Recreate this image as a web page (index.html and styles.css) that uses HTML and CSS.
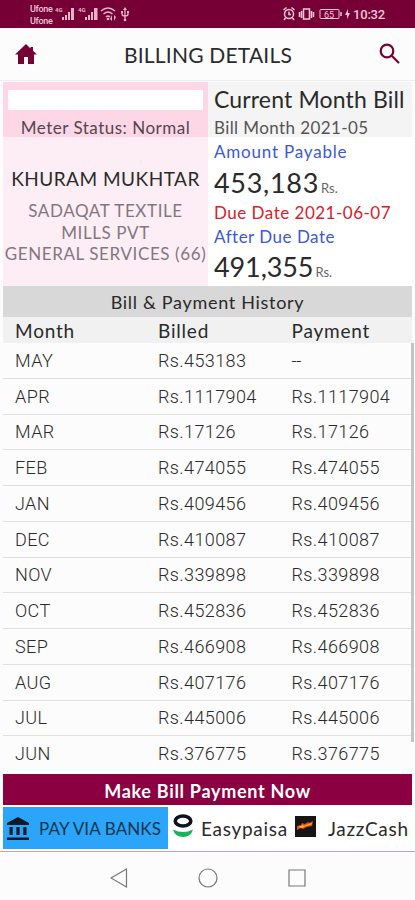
FILE: index.html
```
<!DOCTYPE html>
<html lang="en">
<head>
    <meta charset="UTF-8">
    <meta name="viewport" content="width=device-width, initial-scale=1.0">
    <title>Billing Details</title>
    <link rel="stylesheet" href="styles.css">
</head>
<body>
    <div class="status-bar">
        <div class="carrier"><span>Ufone</span><span>Ufone</span></div>
        <svg class="signals" width="77" height="16" viewBox="0 0 77 16" fill="#e3b4c8">
            <text x="0" y="6" class="net">4G</text>
            <path d="M7 11h2v3H7zM10 9h2v5h-2zM13 6h2v8h-2zM16 2h3v12h-3z"/>
            <text x="23" y="6" class="net">4G</text>
            <path d="M30 11h2v3h-2zM33 9h2v5h-2zM36 6h2v8h-2zM39 2h3.500v12H39z"/>
            <g fill="none" stroke="#e3b4c8" stroke-width="1.500">
                <path d="M46 5q7-6 14 0M48.500 8q4.500-4 9 0M51 11q2-2 4 0"/>
                <path d="M70 13V3M67 6v2q0 2 3 2t3-2V6" stroke-width="1.300"/>
            </g>
            <circle cx="53" cy="13" r="1.300"/>
            <path d="M57 9v6l-2-2zM59 15V9l2 2zM70 1l2 3h-4zM66 5h2v2h-2zM72 5h2v2h-2z"/>
            <circle cx="70" cy="14" r="1.300"/>
        </svg>
        <svg class="system" width="70" height="16" viewBox="0 0 70 16" fill="none" stroke="#ecc8d7" stroke-width="1.500">
            <circle cx="7" cy="8" r="4.500"/>
            <path d="M7 5.500V8.500H9M1.500 4l3-2.500M12.500 4l-3-2.500M3.500 12l-1.500 2M10.500 12l1.500 2"/>
            <path d="M21.500 3h6v10h-6zM19.500 5v7M29.500 5v7M17.500 6v5M31.500 6v5"/>
            <rect x="38" y="3.500" width="19" height="9" rx="1" stroke-width="1"/>
            <path d="M59 6v4" stroke-width="1.500"/>
            <path d="M66 3l-3 6h2v4l3-6h-2z" fill="#ecc8d7" stroke="none"/>
            <text x="42" y="11.500" class="battery">65</text>
        </svg>
        <span class="clock">10:32</span>
    </div>

    <div class="header">
        <svg class="home" width="22" height="21" viewBox="0 0 22 21">
            <path d="M11 0 0 10.500h3V20h6v-7h4v7h6v-9.500h3L18 6.800V3h-2.500v1.400z" fill="#760035"/>
        </svg>
        <h1>BILLING DETAILS</h1>
        <svg class="search" width="22" height="22" viewBox="0 0 22 22" fill="none" stroke="#760035" stroke-width="2.200">
            <circle cx="8" cy="8" r="6.300"/>
            <path d="M12.500 12.500 20 20"/>
        </svg>
    </div>

    <div class="summary">
        <div class="customer">
            <div class="meter">
                <div class="account-no"></div>
                <div class="meter-status">Meter Status: Normal</div>
            </div>
            <div class="name">KHURAM MUKHTAR</div>
            <div class="address">SADAQAT TEXTILE<br>MILLS PVT<br><span class="tariff">GENERAL SERVICES (66)</span></div>
        </div>
        <div class="bill">
            <div class="bill-head">
                <div class="bill-title">Current Month Bill</div>
                <div class="bill-month">Bill Month 2021-05</div>
            </div>
            <div class="bill-label payable">Amount Payable</div>
            <div class="amount">453,183<small>Rs.</small></div>
            <div class="bill-label due">Due Date 2021-06-07</div>
            <div class="bill-label after">After Due Date</div>
            <div class="amount amount-after">491,355<small>Rs.</small></div>
        </div>
    </div>

    <div class="history-title">Bill &amp; Payment History</div>
    <div class="row row-head"><span>Month</span><span>Billed</span><span>Payment</span></div>
    <div class="history">
        <div class="row"><span>MAY</span><span>Rs.453183</span><span class="none">--</span></div>
        <div class="row"><span>APR</span><span>Rs.1117904</span><span>Rs.1117904</span></div>
        <div class="row"><span>MAR</span><span>Rs.17126</span><span>Rs.17126</span></div>
        <div class="row"><span>FEB</span><span>Rs.474055</span><span>Rs.474055</span></div>
        <div class="row"><span>JAN</span><span>Rs.409456</span><span>Rs.409456</span></div>
        <div class="row"><span>DEC</span><span>Rs.410087</span><span>Rs.410087</span></div>
        <div class="row"><span>NOV</span><span>Rs.339898</span><span>Rs.339898</span></div>
        <div class="row"><span>OCT</span><span>Rs.452836</span><span>Rs.452836</span></div>
        <div class="row"><span>SEP</span><span>Rs.466908</span><span>Rs.466908</span></div>
        <div class="row"><span>AUG</span><span>Rs.407176</span><span>Rs.407176</span></div>
        <div class="row"><span>JUL</span><span>Rs.445006</span><span>Rs.445006</span></div>
        <div class="row"><span>JUN</span><span>Rs.376775</span><span>Rs.376775</span></div>
        <div class="scrollbar"></div>
    </div>

    <div class="pay-title">Make Bill Payment Now</div>
    <div class="pay-options">
        <div class="pay banks">
            <svg width="22" height="24" viewBox="0 0 22 24" fill="#0b1a24">
                <path d="M11 0 22 6v2H0V6zM2.500 10h3.200v8H2.500zM9.400 10h3.200v8H9.400zM16.300 10h3.200v8h-3.200zM0 20.500h22V23H0z"/>
            </svg>
            <span>PAY VIA BANKS</span>
        </div>
        <div class="pay easypaisa">
            <svg width="22" height="24" viewBox="0 0 22 24" fill="none">
                <ellipse cx="11" cy="7" rx="7.800" ry="5" stroke="#10131f" stroke-width="3.600"/>
                <path d="M1 15.500q10 5 20 0-2 7.500-10 7.500T1 15.500z" fill="#18b35b"/>
            </svg>
            <span>Easypaisa</span>
        </div>
        <div class="pay jazzcash">
            <svg width="21" height="21" viewBox="0 0 21 21">
                <rect width="21" height="21" fill="#171514"/>
                <path d="M2 10l4-1 1-2 3 1 3-2 1 1 4-2-1 5-5 1-4 2-2-1-4 2z" fill="#d94c20"/>
                <path d="M3 11l5-2 1 1 4-2 4-1-1 2-5 1-4 2z" fill="#f5b32b"/>
            </svg>
            <span>JazzCash</span>
        </div>
    </div>

    <div class="nav-bar">
        <svg width="18" height="20" viewBox="0 0 18 20"><path d="M1 10 16.500 1v18z"/></svg>
        <svg width="20" height="20" viewBox="0 0 20 20"><circle cx="10" cy="10" r="9"/></svg>
        <svg width="18" height="18" viewBox="0 0 18 18"><path d="M1 1h16v16H1z"/></svg>
    </div>
</body>
</html>
```
FILE: styles.css
```
* {
    box-sizing: border-box;
}
body {
    margin: 0;
    width: 415px;
    height: 900px;
    overflow: hidden;
    background: #fcfcfc;
    color: #2a2a2a;
    font-family: Lato, "Open Sans", sans-serif;
    white-space: nowrap;
}
svg {
    display: block;
    flex: none;
}
.status-bar {
    display: flex;
    align-items: center;
    height: 28px;
    padding: 0 29px 0 30px;
    background: #760035;
    color: #ecc8d7;
    font-family: Roboto, sans-serif;
}
.carrier {
    display: flex;
    flex-direction: column;
    width: 25px;
    padding-top: 2px;
    font-size: 9px;
    font-weight: 500;
    line-height: 12px;
    letter-spacing: -0.3px;
}
.net {
    font: bold 6px Roboto, sans-serif;
}
.system {
    margin-left: auto;
}
.battery {
    font: 9px Roboto, sans-serif;
    fill: #ecc8d7;
    stroke: none;
}
.clock {
    width: 33px;
    margin-left: 1px;
    font-size: 13px;
    font-weight: 500;
    letter-spacing: -0.2px;
}
.header {
    display: flex;
    align-items: center;
    justify-content: space-between;
    height: 53px;
    padding: 0 14px 0 15px;
    background: #fcfcfc;
    border-bottom: 1px solid #eee;
}
.header h1 {
    margin: 1px 0 0;
    font-size: 21px;
    font-weight: 400;
    letter-spacing: 0.2px;
}
.summary {
    display: flex;
    height: 205px;
    padding: 1px 3px 0;
}
.customer {
    width: 205px;
    background: #fdeef5;
    text-align: center;
}
.meter {
    height: 55px;
    padding: 8px 5px 0;
    background: #fdd7e6;
}
.account-no {
    height: 20px;
    background: #fff;
}
.meter-status {
    padding-top: 7px;
    font-size: 17px;
    line-height: 22px;
    letter-spacing: 0.5px;
    color: #514850;
}
.name {
    padding-top: 31px;
    font-size: 19px;
    line-height: 22px;
    letter-spacing: 0.5px;
}
.address {
    padding-top: 10px;
    font-size: 17px;
    line-height: 21.500px;
    letter-spacing: 0.6px;
    color: #83777f;
}
.tariff {
    margin: 0 -5px;
}
.bill {
    flex: 1;
    background: #fff;
}
.bill-head {
    height: 55px;
    padding: 3px 0 0 6px;
    background: #f4f4f4;
}
.bill-title {
    font-size: 23px;
    line-height: 28px;
    letter-spacing: 0.15px;
}
.bill-month {
    font-size: 17px;
    line-height: 29px;
    letter-spacing: 0.4px;
    color: #555;
}
.bill-label {
    padding-left: 6px;
    font-size: 17px;
    line-height: 24px;
    letter-spacing: 0.5px;
    color: #3d58d4;
}
.payable {
    padding-top: 3px;
    line-height: 23px;
    letter-spacing: 0.8px;
}
.due {
    color: #d8202a;
}
.amount {
    height: 38px;
    padding-left: 6px;
    font-size: 27px;
    line-height: 40px;
    letter-spacing: 0.7px;
}
.amount small {
    margin-left: 2px;
    font-size: 13px;
    letter-spacing: 0;
    color: #666;
}
.amount-after {
    line-height: 36px;
    letter-spacing: -0.1px;
}
.history-title {
    height: 31px;
    margin: 0 3px;
    background: #d8d8d8;
    text-align: center;
    font-size: 18px;
    line-height: 32px;
    letter-spacing: 0.7px;
}
.row {
    display: grid;
    grid-template-columns: 143px 133.500px 1fr;
    align-items: center;
    height: 35.750px;
    margin: 0 3px;
    padding-left: 12px;
    border-bottom: 1px solid #e0e0e0;
    font-family: Roboto, sans-serif;
    font-size: 18px;
    font-weight: 300;
    letter-spacing: 0.4px;
}
.row-head {
    height: 26px;
    border: 0;
    background: #f1f1f1;
    font-family: Lato, sans-serif;
    font-size: 19px;
    font-weight: 400;
    letter-spacing: 0.8px;
}
.none {
    letter-spacing: -0.5px;
}
.history {
    position: relative;
    height: 431px;
    overflow: hidden;
}
.history .row:nth-child(12) {
    height: 35px;
    border: 0;
}
.scrollbar {
    position: absolute;
    top: 0;
    right: 1px;
    width: 3px;
    height: 399px;
    background: #c4c4c4;
}
.pay-title {
    height: 31px;
    margin: 0 3px;
    background: #8b0040;
    color: #fff;
    text-align: center;
    font-size: 18px;
    font-weight: 700;
    line-height: 34px;
    letter-spacing: 0.7px;
}
.pay-options {
    display: flex;
    height: 47px;
    padding: 2px 3px;
    background: #fff;
    border-bottom: 1px solid #c9a0b4;
}
.pay {
    display: flex;
    align-items: center;
    padding-top: 1px;
    font-size: 19px;
    letter-spacing: 0.7px;
}
.banks {
    width: 165px;
    padding-left: 4px;
    gap: 10px;
    background: #2aa5fa;
    color: #12354c;
    font-size: 17px;
    letter-spacing: 0.1px;
}
.easypaisa {
    width: 127px;
    padding-left: 4px;
    gap: 7px;
}
.easypaisa svg {
    margin-bottom: 5px;
}
.jazzcash {
    gap: 12px;
}
.jazzcash svg {
    margin-bottom: 5px;
}
.nav-bar {
    display: flex;
    align-items: center;
    justify-content: center;
    gap: 70px;
    height: 51px;
}
.nav-bar svg {
    fill: none;
    stroke: #777;
    stroke-width: 1.200;
}
```
